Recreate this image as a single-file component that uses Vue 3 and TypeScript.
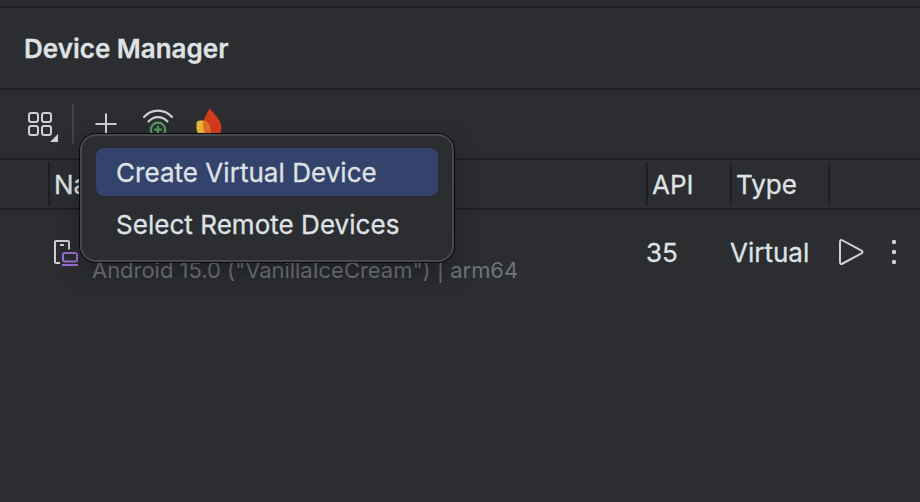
<script setup lang="ts">
import { ref } from 'vue'

interface Device {
  details: string
  api: number
  type: string
}

const devices: Device[] = [
  { details: 'Android 15.0 ("VanillaIceCream") | arm64', api: 35, type: 'Virtual' },
]
const actions: string[] = ['Create Virtual Device', 'Select Remote Devices']
const selected = ref(0)
</script>

<template>
  <main class="window">
    <div class="strip"></div>
    <header class="title"><h1>Device Manager</h1></header>

    <div class="toolbar">
      <svg class="grid-icon" width="34" height="34" viewBox="0 0 34 34">
        <g fill="none" stroke="#ced0d6" stroke-width="2">
          <rect x="3" y="4" width="9" height="9" rx="2.300" />
          <rect x="16" y="4" width="9" height="9" rx="2.300" />
          <rect x="3" y="17" width="9" height="9" rx="2.300" />
          <rect x="16" y="17" width="9" height="9" rx="2.300" />
        </g>
        <path d="M32 25v8h-8z" fill="#ced0d6" />
      </svg>
      <span class="divider"></span>
      <div class="add">
        <svg width="22" height="22" viewBox="0 0 22 22">
          <path d="M11 0.5v21M0.5 11h21" stroke="#ced0d6" stroke-width="2" />
        </svg>
        <ul class="menu">
          <li
            v-for="(action, i) in actions"
            :key="action"
            :class="{ active: i === selected }"
            @mouseenter="selected = i"
          ><span>{{ action }}</span></li>
        </ul>
      </div>
      <svg class="wifi" width="32" height="32" viewBox="0 0 32 32">
        <g fill="none" stroke-width="2.200" stroke-linecap="round">
          <path d="M2 9C9.500 0.500 22.500 0.500 30 9" stroke="#ced0d6" />
          <path d="M6.500 13.500C12 7.700 20 7.700 25.500 13.500" stroke="#ced0d6" />
          <circle cx="16" cy="21.800" r="7.200" stroke="#57965c" />
          <path d="M16 18.500v6.500M12.800 21.700h6.400" stroke="#57965c" />
        </g>
      </svg>
      <svg class="flame" width="28" height="32" viewBox="0 0 28 32">
        <path d="M14.500 0C17 4.500 26.500 11 26.500 20C26.500 27 21 31 15 31C11 29 8 25 8 18C8 10 13 5 14.500 0Z" fill="#d33c1a" />
        <path d="M1.500 15Q2 12.500 5 12.500H8C12 13 15.500 17 15.500 24L14 31C6 30 1.500 26 1.500 20Z" fill="#efb83c" />
        <path d="M8.300 12.700C13 13.500 15.500 18 15.500 24L14 31C10 28 7 20 8.300 12.700Z" fill="#e0702a" />
      </svg>
    </div>

    <div class="row head">
      <div></div>
      <div class="name">Name</div>
      <div class="api">API</div>
      <div class="type">Type</div>
      <div></div>
    </div>

    <div v-for="device in devices" :key="device.details" class="row device">
      <svg class="device-icon" width="28" height="28" viewBox="0 0 28 28">
        <g fill="none" stroke-width="2">
          <path d="M8 24H4Q3 24 3 23V3Q3 2 4 2H16Q17 2 17 3V10.500M8 6H12" stroke="#ced0d6" />
          <rect x="11" y="14" width="14" height="8.500" rx="2" stroke="#9b6dd6" />
          <path d="M10 26h16" stroke="#9b6dd6" />
        </g>
      </svg>
      <div class="details"><span>{{ device.details }}</span></div>
      <div>{{ device.api }}</div>
      <div>{{ device.type }}</div>
      <div class="controls">
        <svg width="26" height="30" viewBox="0 0 26 30">
          <path d="M2 4Q2 1 4.700 2.500L23.500 12.700Q25.500 14 23.500 15.300L4.700 25.500Q2 27 2 24Z" fill="none" stroke="#ced0d6" stroke-width="2" />
        </svg>
        <svg width="6" height="28" viewBox="0 0 6 28" fill="#ced0d6">
          <circle cx="3" cy="3" r="2.200" /><circle cx="3" cy="13" r="2.200" /><circle cx="3" cy="23" r="2.200" />
        </svg>
      </div>
    </div>
  </main>
</template>

<style>
body { background: #2b2d30; overflow: hidden; }
</style>

<style scoped>
* { box-sizing: border-box; }
.window {
  width: 920px;
  height: 502px;
  background: #2b2d30;
  color: #dfe1e5;
  font: 400 26px/32px Inter, sans-serif;
  -webkit-text-stroke: 0.3px currentColor;
}
.strip { height: 8px; border-bottom: 2px solid #1e1f22; }
.title {
  height: 82px;
  display: flex;
  align-items: center;
  padding: 2px 0 0 24px;
  border-bottom: 2px solid #1e1f22;
}
h1 { margin: 0; font-size: 26px; line-height: 32px; font-weight: 600; }
.toolbar {
  height: 70px;
  display: flex;
  align-items: flex-start;
  border-bottom: 2px solid #1e1f22;
}
.toolbar svg { display: block; flex: none; }
.grid-icon { margin: 19px 0 0 26px; }
.divider { width: 2px; height: 40px; margin: 14px 0 0 12px; background: #43454a; }
.add { position: relative; margin: 23px 0 0 21px; width: 22px; height: 22px; }
.wifi { margin: 18px 0 0 25px; }
.flame { margin: 18px 0 0 21px; }
.menu {
  position: absolute;
  z-index: 2;
  left: -15px;
  top: 21px;
  width: 374px;
  height: 128px;
  margin: 0;
  padding: 12px 14px;
  display: flex;
  flex-direction: column;
  gap: 4px;
  list-style: none;
  background: #2b2d30;
  border: 2px solid #46484b;
  border-radius: 16px;
  box-shadow: 0 0 0 1px #0b0b0d, 0 10px 28px rgba(0, 0, 0, 0.3);
}
.menu li {
  height: 48px;
  padding: 2px 0 0 20px;
  display: flex;
  align-items: center;
  border-radius: 8px;
  white-space: nowrap;
  letter-spacing: 0.04px;
}
.menu .active { background: #33436b; }
.row { display: grid; grid-template-columns: 48px 598px 84px 98px 1fr; }
.head { height: 50px; padding: 2px 0; border-bottom: 2px solid #1e1f22; }
.head div { height: 44px; line-height: 45px; }
.head div + div { border-left: 2px solid #1e1f22; }
.name, .api, .type { padding-left: 4px; }
.device { height: 86px; align-items: center; }
.device-icon { grid-column: 1 / 3; grid-row: 1; margin-left: 52px; }
.details {
  grid-column: 2;
  grid-row: 1;
  align-self: end;
  padding: 0 0 12px 44px;
  font-size: 22px;
  line-height: 28px;
  letter-spacing: -0.03px;
  color: #6f737a;
  -webkit-text-stroke: 0;
}
.controls { display: flex; align-items: center; gap: 27px; padding-left: 10px; }
.controls svg { display: block; flex: none; }
</style>
